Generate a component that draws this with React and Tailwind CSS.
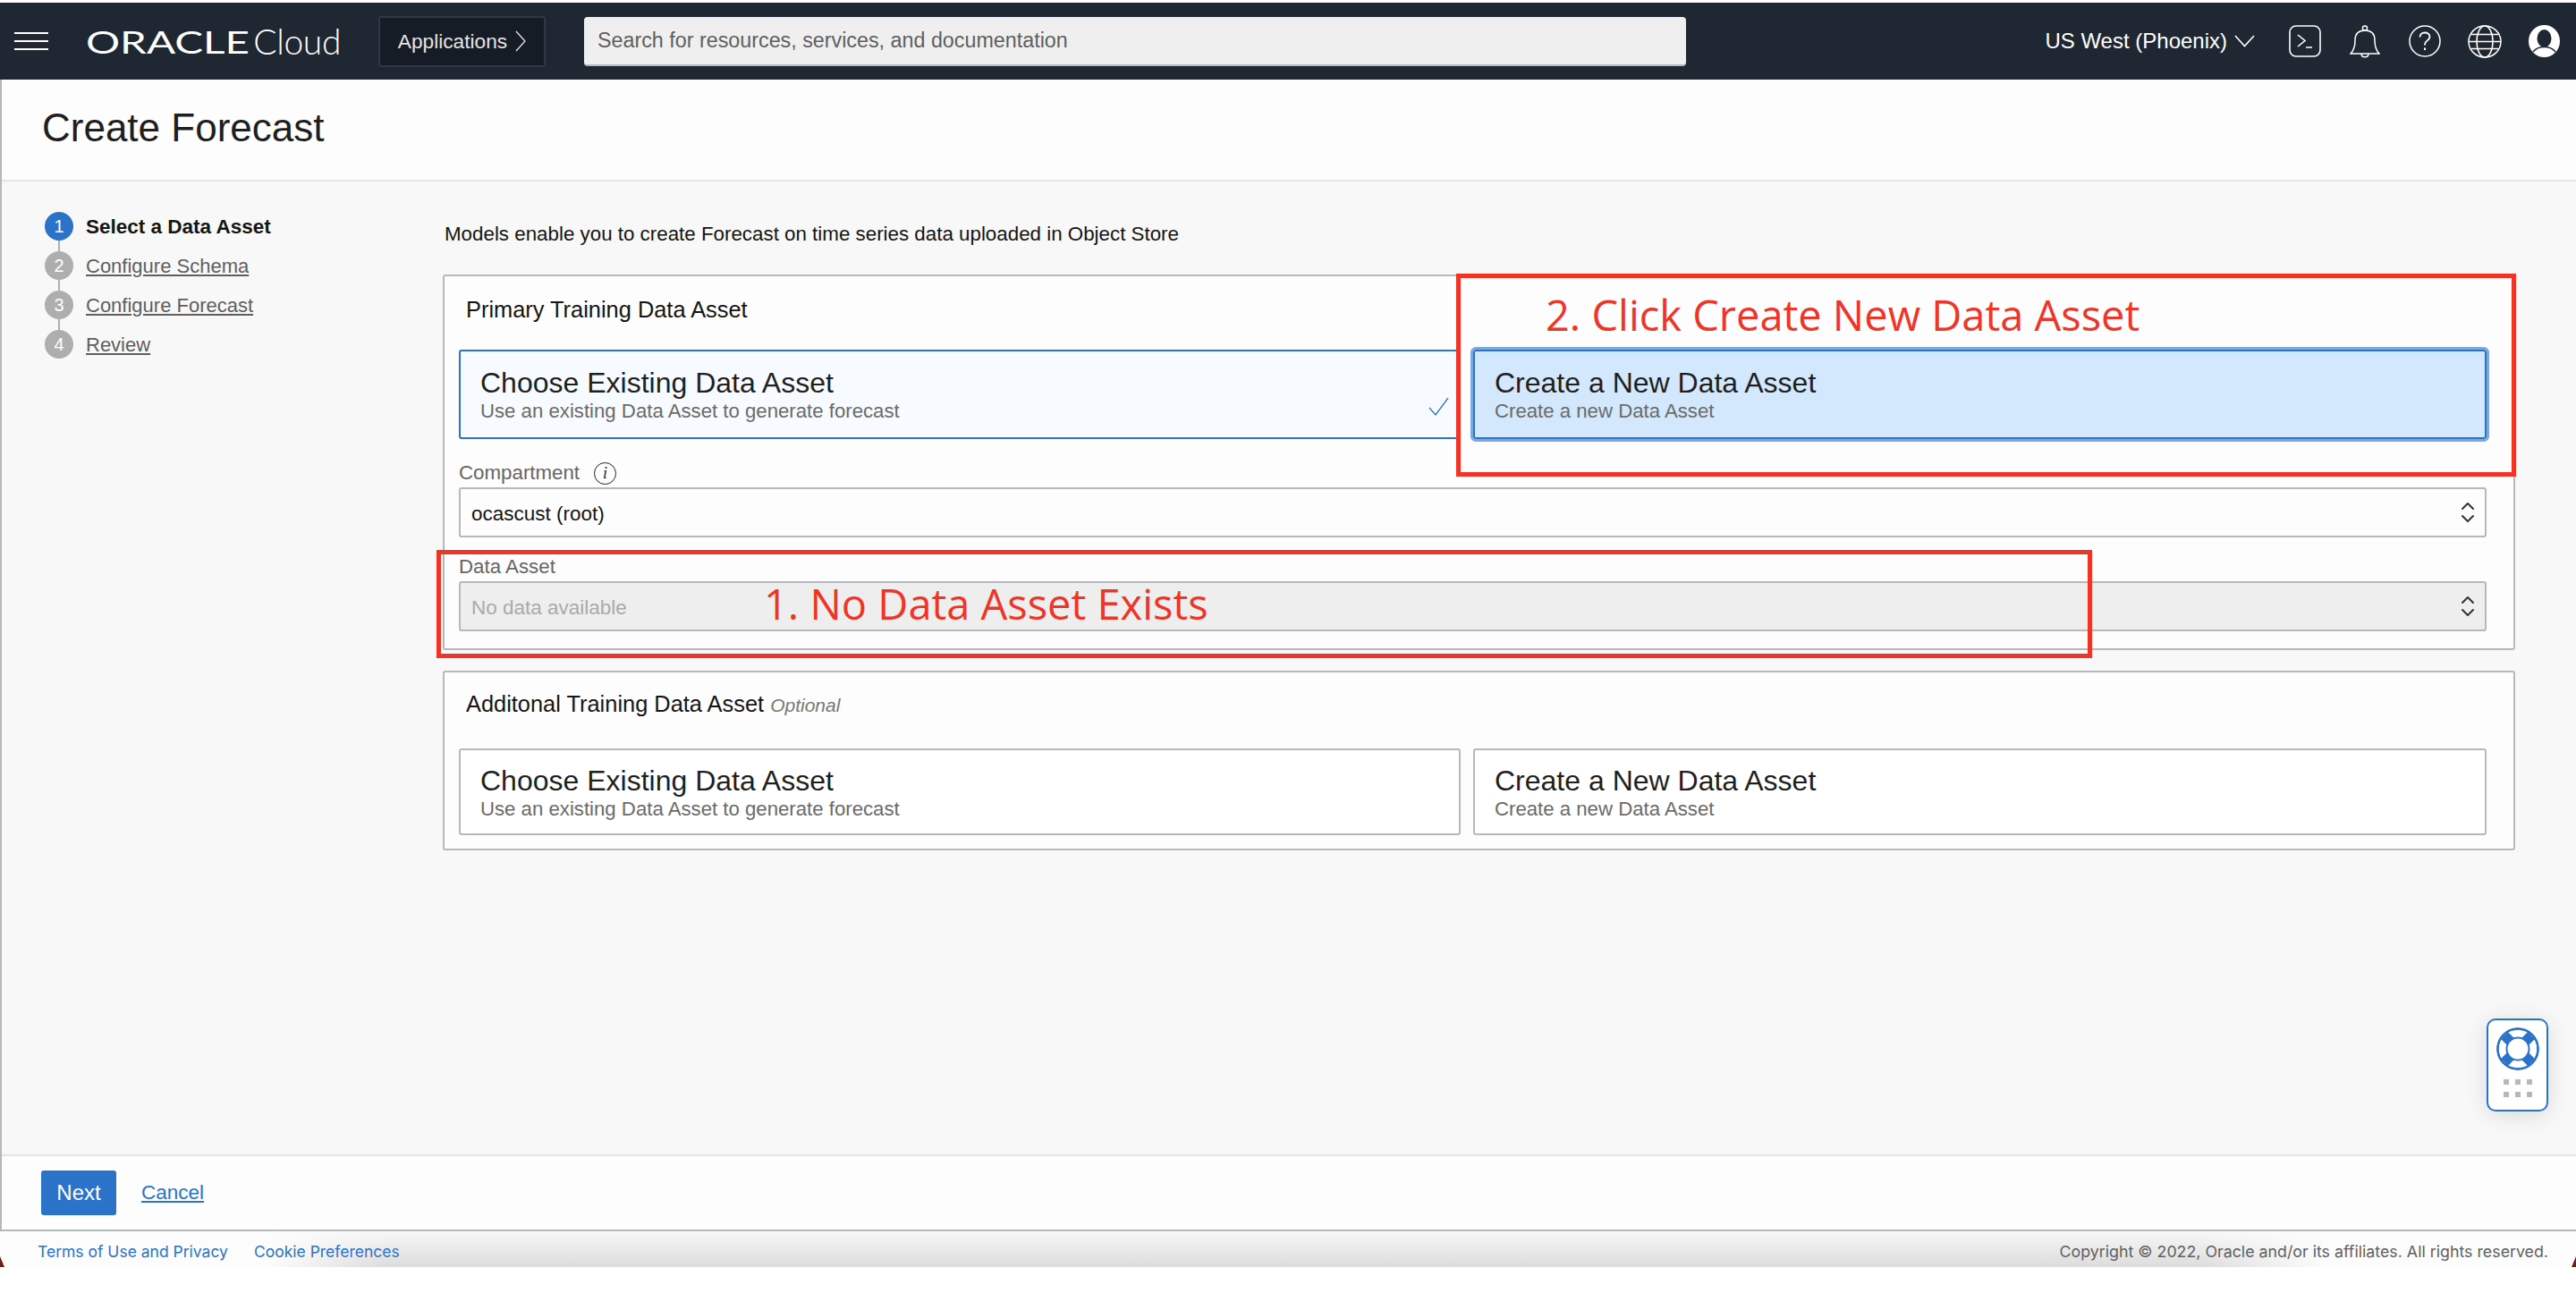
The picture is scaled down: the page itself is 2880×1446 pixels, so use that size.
import { ChevronDown, ChevronUp } from "lucide-react";

const sans = "font-['Liberation_Sans',Arial,sans-serif]";

const steps = [
  { n: 1, label: "Select a Data Asset", active: true },
  { n: 2, label: "Configure Schema" },
  { n: 3, label: "Configure Forecast" },
  { n: 4, label: "Review", last: true },
];

function TerminalIcon() {
  return (
    <svg width="36" height="36" viewBox="0 0 36 36" fill="none" stroke="#fff" strokeWidth="1.6">
      <rect x="1" y="1" width="34" height="34" rx="7" />
      <path d="M10 11l8 6.5-8 6.5M19 25h7" />
    </svg>
  );
}

function BellIcon() {
  return (
    <svg width="34" height="37" viewBox="0 0 34 37" fill="none" stroke="#fff" strokeWidth="1.5">
      <circle cx="17" cy="3.5" r="2.6" />
      <path d="M1 32c4-4 5-8 5-15 0-7 4-11 11-11s11 4 11 11c0 7 1 11 5 15z" />
      <path d="M13 32c0 5 8 5 8 0" />
    </svg>
  );
}

function HelpIcon() {
  return (
    <svg width="36" height="36" viewBox="0 0 36 36" fill="none" stroke="#fff" strokeWidth="1.5">
      <circle cx="18" cy="18" r="17" />
      <path d="M12.5 13.5c0-3.2 2.5-5 5.5-5s5.500 1.800 5.500 4.800c0 4-5.500 4.200-5.500 8.200v1" strokeWidth="1.800" />
      <path d="M18 25.500v2.500" strokeWidth="2" />
    </svg>
  );
}

function GlobeIcon() {
  return (
    <svg width="38" height="37" viewBox="0 0 38 37" fill="none" stroke="#fff" strokeWidth="1.5">
      <ellipse cx="19" cy="18.500" rx="18" ry="17.500" />
      <ellipse cx="19" cy="18.500" rx="9" ry="17.500" />
      <path d="M1 18.500h36M4 10.500h30M4 26.500h30" />
    </svg>
  );
}

function UserIcon() {
  return (
    <svg width="35" height="36" viewBox="0 0 35 36">
      <ellipse cx="17.500" cy="18" rx="17.500" ry="18" fill="#fff" />
      <ellipse cx="17.500" cy="15" rx="8" ry="10" fill="#1f2733" />
      <path d="M5 30c3-4 8-5.500 12.500-5.500S27 26 30 30" fill="none" stroke="#1f2733" strokeWidth="1.500" />
    </svg>
  );
}

function Lifebuoy() {
  return (
    <svg width="48" height="48" viewBox="0 0 48 48" fill="none" stroke="#2b73c8">
      <circle cx="24" cy="24" r="22.500" strokeWidth="2" fill="#fff" />
      <path d="M9 9l30 30M39 9L9 39" strokeWidth="11" />
      <circle cx="24" cy="24" r="22.500" strokeWidth="2.500" />
      <circle cx="24" cy="24" r="12.500" strokeWidth="2" fill="#fff" />
    </svg>
  );
}

function CornerMark({ flip }) {
  return (
    <svg width="5" height="12" viewBox="0 0 5 12" className={flip ? "-scale-x-100" : ""}>
      <path d="M0 0L5 12H0z" fill="#6b2018" />
    </svg>
  );
}

function Stepper() {
  return (
    <div className="flex w-[493px] shrink-0 flex-col pl-[48px] pt-[34px]">
      {steps.map((step) => (
        <div key={step.n} className="flex h-[44px] items-start gap-[14px]">
          <div className="flex w-[32px] flex-col items-center">
            <div
              className={`flex h-[32px] w-[32px] items-center justify-center rounded-full text-[20px] text-white ${
                step.active ? "bg-[#2b73c8]" : "bg-[#aeaeae]"
              }`}
            >
              {step.n}
            </div>
            {!step.last && <div className="h-[12px] w-[2px] bg-[#aeaeae]" />}
          </div>
          <span
            className={`leading-[33px] ${
              step.active ? "text-[22.500px] font-bold text-[#161513]" : "text-[22px] text-[#5f5f5f] underline underline-offset-2"
            }`}
          >
            {step.label}
          </span>
        </div>
      ))}
    </div>
  );
}

function OptionCard({ title, text, selected, focused, check, width = "flex-1", height = "h-[100px]" }) {
  let tone = "border-[#b5b8bd] bg-white";
  if (selected) tone = "border-[#2b73c8] bg-[#f7fbff]";
  if (focused) tone = "border-[#2b73c8] bg-[#d3e7fd] outline-[3px] outline-[#7fa9dd]";
  return (
    <div className={`relative flex flex-col justify-center rounded-[3px] border-2 pl-[22px] ${tone} ${width} ${height}`}>
      <div className="text-[32px] leading-[38px] text-[#1f1f1f]">{title}</div>
      <div className="text-[22.200px] leading-[26px] text-[#6b6b6b]">{text}</div>
      {check && (
        <svg width="23" height="20" viewBox="0 0 23 20" fill="none" stroke="#2b73c8" strokeWidth="1.300" className="absolute bottom-[24px] right-[11px]">
          <path d="M1 11l7 8L22 0" />
        </svg>
      )}
    </div>
  );
}

function SelectBox({ value, disabled }) {
  return (
    <div
      className={`mt-[1px] flex h-[56px] items-center justify-between rounded-[3px] border-2 border-[#b5b8bd] pl-[12px] pr-[7px] text-[22.500px] ${
        disabled ? "bg-[#eeeeee] text-[#aaaaaa]" : "bg-[#fdfdfd] text-[#161513]"
      }`}
    >
      <span className="pt-[3px]">{value}</span>
      <span className="flex flex-col text-[#333333]">
        <ChevronUp size={24} strokeWidth={2} className="-mb-[5px]" />
        <ChevronDown size={24} strokeWidth={2} className="-mt-[5px]" />
      </span>
    </div>
  );
}

export default function App() {
  return (
    <div className={`relative h-[1446px] w-full overflow-hidden bg-white pt-[3px] ${sans}`}>
      <header className="flex h-[86px] items-center bg-[#1f2733] text-white">
        <div className="ml-[16px] flex w-[38px] flex-col gap-[7px]">
          <div className="h-[2px] bg-white" />
          <div className="h-[2px] bg-white" />
          <div className="h-[2px] bg-white" />
        </div>
        <div className="ml-[42px] flex w-[285px] items-center leading-none">
          <span className="inline-block w-[195px] origin-left scale-x-[1.36] font-['Lato',sans-serif] text-[35px] font-normal">ORACLE</span>
          <span className="font-['Lato',sans-serif] text-[39px] font-light tracking-[-0.01em]">Cloud</span>
        </div>
        <div className="ml-[42px] flex h-[57px] w-[187px] items-center justify-center gap-[9px] rounded-[3px] border-2 border-[#2f3845] bg-[#161c26] text-[22.700px] text-[#e4e4e4]">
          Applications
          <svg width="12" height="24" viewBox="0 0 12 24" fill="none" stroke="#e4e4e4" strokeWidth="1.300">
            <path d="M1 1l10 11L1 23" />
          </svg>
        </div>
        <div className="ml-[43px] flex h-[55px] w-[1232px] items-center rounded-[4px] border-b-2 border-[#b5b8bd] bg-[#efefef] pl-[15px] text-[23.300px] text-[#5f5f5f]">
          Search for resources, services, and documentation
        </div>
        <div className="ml-auto flex items-center pr-[18px]">
          <span className="text-[24px]">US West (Phoenix)</span>
          <svg width="23" height="14" viewBox="0 0 23 14" fill="none" stroke="#fff" strokeWidth="1.600" className="ml-[8px]">
            <path d="M1 1l10.500 11.500L22 1" />
          </svg>
          <div className="ml-[38px]"><TerminalIcon /></div>
          <div className="ml-[32px]"><BellIcon /></div>
          <div className="ml-[32px]"><HelpIcon /></div>
          <div className="ml-[30px]"><GlobeIcon /></div>
          <div className="ml-[30px]"><UserIcon /></div>
        </div>
      </header>

      <main className="flex h-[1288px] flex-col border-b-2 border-l-2 border-b-[#b5b8bd] border-l-[#b5b8bd]">
        <div className="flex h-[114px] shrink-0 items-center border-b-2 border-[#e4e4e4] bg-[#fdfdfd] pb-[4px] pl-[45px] text-[44px] font-normal text-[#1f1f1f]">
          Create Forecast
        </div>
        <div className="flex min-h-0 flex-1 bg-[#f8f8f8]">
          <Stepper />
          <div className="w-[2317px] shrink-0">
            <p className="ml-[2px] mt-[46px] text-[22.350px] leading-[26px] text-[#161513]">
              Models enable you to create Forecast on time series data uploaded in Object Store
            </p>
            <section className="mt-[32px] h-[420px] rounded-[3px] border-2 border-[#b5b8bd] bg-[#fdfdfd] pl-[16px] pr-[30px]">
              <h2 className="ml-[8px] mt-[22px] text-[25.400px] leading-[30px] text-[#161513]">Primary Training Data Asset</h2>
              <div className="mt-[30px] flex gap-[14px]">
                <OptionCard width="w-[1120px]" title="Choose Existing Data Asset" text="Use an existing Data Asset to generate forecast" selected check />
                <OptionCard title="Create a New Data Asset" text="Create a new Data Asset" focused />
              </div>
              <label className="mt-[23px] flex h-[30px] items-center gap-[16px] text-[22.300px] text-[#666666]">
                Compartment
                <span className="flex h-[25px] w-[25px] items-center justify-center rounded-full border-[1.500px] border-[#222222] font-['Liberation_Serif',serif] text-[18px] italic text-[#222222]">i</span>
              </label>
              <SelectBox value="ocascust (root)" />
              <label className="mt-[18px] flex h-[30px] items-center text-[22.300px] text-[#666666]">Data Asset</label>
              <SelectBox value="No data available" disabled />
            </section>
            <section className="mt-[23px] h-[201px] rounded-[3px] border-2 border-[#b5b8bd] bg-[#fdfdfd] pl-[16px] pr-[30px]">
              <h2 className="ml-[8px] mt-[20px] text-[25.400px] leading-[30px] text-[#161513]">
                Additonal Training Data Asset <span className="text-[21px] italic text-[#777777]">Optional</span>
              </h2>
              <div className="mt-[33px] flex gap-[14px]">
                <OptionCard width="w-[1120px]" height="h-[97px]" title="Choose Existing Data Asset" text="Use an existing Data Asset to generate forecast" />
                <OptionCard height="h-[97px]" title="Create a New Data Asset" text="Create a new Data Asset" />
              </div>
            </section>
          </div>
        </div>
        <div className="flex h-[84px] shrink-0 items-center gap-[28px] border-t-2 border-[#e4e4e4] bg-[#fdfdfd] pl-[44px]">
          <button className="h-[50px] w-[84px] rounded-[3px] bg-[#2b73c8] text-[24px] text-white">Next</button>
          <a className="text-[22.500px] text-[#2b73c8] underline underline-offset-2">Cancel</a>
        </div>
      </main>

      <footer className="relative flex h-[40px] items-center justify-between bg-[linear-gradient(to_right,#fcfcfc_300px,transparent_430px,transparent_2460px,#fcfcfc_2600px),linear-gradient(to_bottom,#f8f8f8,#dcdcdc)] pl-[42px] pr-[31px] pt-[6px] font-['Inter',sans-serif]">
        <div className="flex gap-[29px] text-[17.500px] text-[#2b73c8]">
          <span>Terms of Use and Privacy</span>
          <span>Cookie Preferences</span>
        </div>
        <span className="text-[17.800px] text-[#5f5f5f]">Copyright © 2022, Oracle and/or its affiliates. All rights reserved.</span>
        <div className="absolute bottom-0 left-0"><CornerMark /></div>
        <div className="absolute bottom-0 right-0"><CornerMark flip /></div>
      </footer>

      {/* help widget floats over the page */}
      <div className="absolute left-[2780px] top-[1139px] flex h-[104px] w-[69px] flex-col items-center rounded-[10px] border-2 border-[#2b73c8] bg-white pt-[8px] shadow-[0_4px_24px_rgba(0,0,0,0.12)]">
        <Lifebuoy />
        <div className="mt-[10px] grid grid-cols-3 gap-x-[7px] gap-y-[8px]">
          {[0, 1, 2, 3, 4, 5].map((i) => (
            <div key={i} className="h-[6px] w-[6px] bg-[#b5b8bd]" />
          ))}
        </div>
      </div>

      {/* annotations drawn on top of the screenshot */}
      <div className="absolute left-[488px] top-[615px] h-[121px] w-[1851px] border-[5px] border-[#ee3528]" />
      <div className="absolute left-[1628px] top-[306px] h-[227px] w-[1185px] border-[5px] border-[#ee3528]" />
      <div className="absolute left-[854px] top-[640px] font-['Open_Sans',sans-serif] text-[47px] font-medium leading-[70px] text-[#ee3528]">1. No Data Asset Exists</div>
      <div className="absolute left-[1728px] top-[317px] font-['Open_Sans',sans-serif] text-[47px] font-medium leading-[70px] text-[#ee3528]">2. Click Create New Data Asset</div>
    </div>
  );
}
